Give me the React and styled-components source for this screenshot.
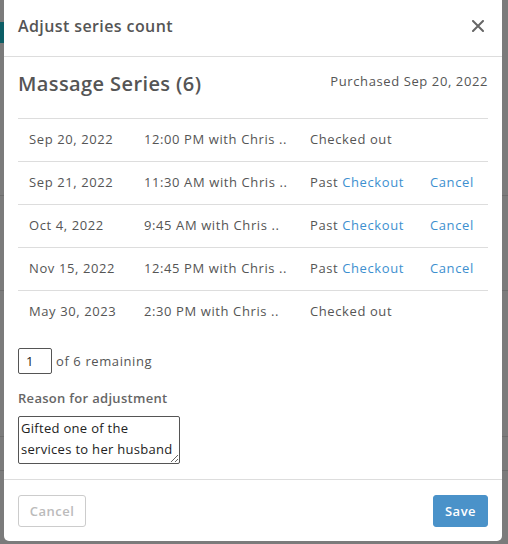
import React from "react";
import styled, { createGlobalStyle } from "styled-components";

const Global = createGlobalStyle`
  html, body { margin: 0; padding: 0; }
  body {
    width: 508px; height: 544px; overflow: hidden;
    background: #7b7b7b;
    font-family: "Open Sans", "Lato", sans-serif;
    letter-spacing: 0.6px;
  }
`;

const Backdrop = styled.div`
  position: relative;
  width: 508px;
  height: 544px;
  background: #7b7b7b;
  overflow: hidden;
`;

const BgStripe = styled.div`
  position: absolute;
  left: 0;
  right: 0;
  height: 1px;
  background: #6d6d6d;
`;

const BgTeal = styled.div`
  position: absolute;
  left: 0;
  top: 22px;
  width: 6px;
  height: 21px;
  background: #0d5e66;
`;

const Modal = styled.div`
  position: absolute;
  left: 4px;
  top: 0;
  width: 498px;
  height: 541px;
  background: #fff;
  border-radius: 0 0 5px 5px;
  display: flex;
  flex-direction: column;
  color: #555;
`;

const Header = styled.div`
  height: 57px;
  box-sizing: border-box;
  border-bottom: 1px solid #ddd;
  display: flex;
  align-items: center;
  justify-content: space-between;
  padding: 0 16px 4px 14px;
`;

const Title = styled.h2`
  margin: 0;
  font-size: 16px;
  font-weight: 600;
  color: #555;
  letter-spacing: 0.4px;
`;

const Close = styled.button`
  border: 0;
  background: none;
  padding: 0;
  width: 16px;
  height: 16px;
  display: flex;
  align-items: center;
  justify-content: center;
  cursor: pointer;
`;

const Body = styled.div`
  flex: 1;
  padding: 0 14px;
  display: flex;
  flex-direction: column;
`;

const SeriesHead = styled.div`
  height: 61px;
  display: flex;
  align-items: center;
  justify-content: space-between;
  padding-bottom: 8px;
  box-sizing: border-box;
`;

const SeriesTitle = styled.div`
  font-size: 20px;
  font-weight: 600;
  color: #555;
  letter-spacing: 0.4px;
`;

const Purchased = styled.div`
  font-size: 13px;
  color: #555;
  margin-top: -6px;
`;

const Table = styled.div`
  border-top: 1px solid #ddd;
`;

const Row = styled.div`
  height: 43px;
  box-sizing: border-box;
  display: grid;
  grid-template-columns: 115px 166px 120px 1fr;
  align-items: center;
  padding-left: 11px;
  padding-bottom: 3px;
  font-size: 13px;
  color: #555;
  white-space: nowrap;
  border-bottom: ${(p) => (p.$last ? "none" : "1px solid #ddd")};
`;

const Link = styled.a`
  color: #3d8fcf;
  text-decoration: none;
  cursor: pointer;
`;

const CountRow = styled.div`
  margin-top: 14px;
  display: flex;
  align-items: center;
  gap: 4px;
  font-size: 13px;
  color: #555;
`;

const CountInput = styled.input`
  width: 34px;
  height: 26px;
  box-sizing: border-box;
  border: 1px solid #555;
  border-radius: 2px;
  padding: 0 7px;
  font-family: inherit;
  font-size: 13px;
  color: #222;
  outline: none;
`;

const Label = styled.div`
  margin-top: 15px;
  font-size: 13px;
  font-weight: 600;
  color: #666;
  letter-spacing: 0.3px;
`;

const Reason = styled.textarea`
  margin-top: 9px;
  width: 162px;
  height: 48px;
  box-sizing: border-box;
  border: 1px solid #555;
  border-radius: 2px;
  padding: 1px 2px;
  font-family: inherit;
  font-size: 13px;
  letter-spacing: 0.3px;
  line-height: 21px;
  color: #222;
  resize: both;
  outline: none;
  overflow: hidden;
`;

const Footer = styled.div`
  height: 62px;
  box-sizing: border-box;
  border-top: 1px solid #ddd;
  display: flex;
  align-items: center;
  justify-content: space-between;
  padding: 0 14px;
`;

const Button = styled.button`
  height: 32px;
  box-sizing: border-box;
  padding: 0;
  border-radius: 3px;
  font-family: inherit;
  font-size: 13px;
  font-weight: 600;
  letter-spacing: 0.5px;
  border: 1px solid ${(p) => (p.$primary ? "#4a92c9" : "#ccc")};
  background: ${(p) => (p.$primary ? "#4a92c9" : "#fff")};
  color: ${(p) => (p.$primary ? "#fff" : "#bbb")};
  width: ${(p) => (p.$primary ? "55px" : "68px")};
  cursor: pointer;
`;

const rows = [
  { date: "Sep 20, 2022", time: "12:00 PM with Chris ..", status: "checked" },
  { date: "Sep 21, 2022", time: "11:30 AM with Chris ..", status: "past" },
  { date: "Oct 4, 2022", time: "9:45 AM with Chris ..", status: "past" },
  { date: "Nov 15, 2022", time: "12:45 PM with Chris ..", status: "past" },
  { date: "May 30, 2023", time: "2:30 PM with Chris ..", status: "checked" },
];

export default function App() {
  return (
    <>
      <Global />
      <Backdrop>
        <BgTeal />
        <BgStripe style={{ top: 195 }} />
        <BgStripe style={{ top: 290 }} />
        <BgStripe style={{ top: 436 }} />
        <BgStripe style={{ top: 470 }} />
        <Modal>
          <Header>
            <Title>Adjust series count</Title>
            <Close aria-label="Close">
              <svg width="12" height="12" viewBox="0 0 12 12">
                <path d="M1 1L11 11M11 1L1 11" stroke="#666" strokeWidth="2" strokeLinecap="round" />
              </svg>
            </Close>
          </Header>
          <Body>
            <SeriesHead>
              <SeriesTitle>Massage Series (6)</SeriesTitle>
              <Purchased>Purchased Sep 20, 2022</Purchased>
            </SeriesHead>
            <Table>
              {rows.map((r, i) => (
                <Row key={i} $last={i === rows.length - 1}>
                  <span>{r.date}</span>
                  <span>{r.time}</span>
                  {r.status === "checked" ? (
                    <span>Checked out</span>
                  ) : (
                    <span>
                      Past <Link>Checkout</Link>
                    </span>
                  )}
                  {r.status === "past" ? <Link>Cancel</Link> : <span />}
                </Row>
              ))}
            </Table>
            <CountRow>
              <CountInput defaultValue="1" />
              <span>of 6 remaining</span>
            </CountRow>
            <Label>Reason for adjustment</Label>
            <Reason defaultValue="Gifted one of the services to her husband" />
          </Body>
          <Footer>
            <Button>Cancel</Button>
            <Button $primary>Save</Button>
          </Footer>
        </Modal>
      </Backdrop>
    </>
  );
}
